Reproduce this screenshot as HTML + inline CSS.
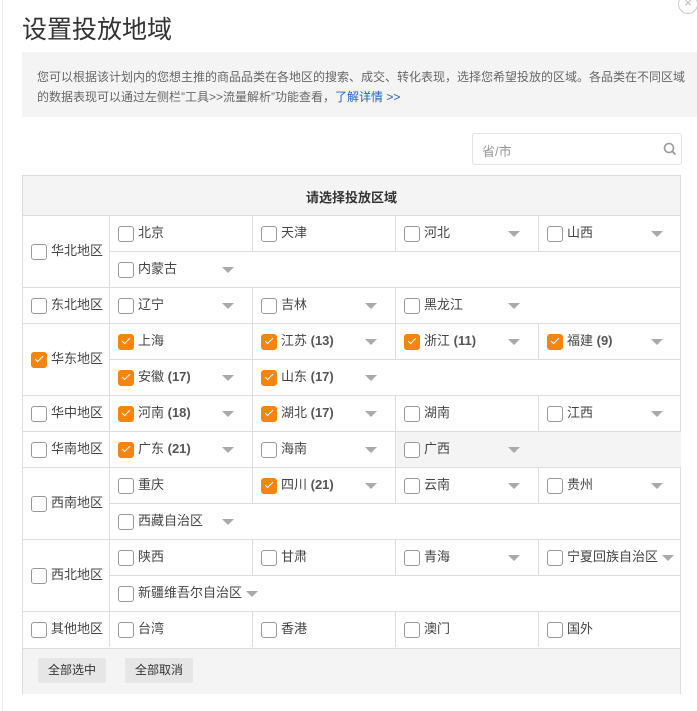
<!DOCTYPE html>
<html><head><meta charset="utf-8"><style>
body{margin:0;width:697px;height:711px;background:#fff;font-family:"Liberation Sans","Noto Sans CJK SC",sans-serif;position:relative;overflow:hidden}
.a{position:absolute}
.cb{position:absolute;width:14px;height:14px;border:1px solid #999;border-radius:3px;background:#fff}
.cb.on{background:#f5850f;border-color:#f5850f}
.cb.on:after{content:"";position:absolute;left:5px;top:1px;width:3px;height:7px;border:solid #fff;border-width:0 1.5px 1.5px 0;transform:rotate(45deg)}
.t{position:absolute;font-size:13px;color:#444;white-space:nowrap;line-height:16px}
.t b{font-weight:bold;color:#555}
.tri{position:absolute;width:0;height:0;border-left:6px solid transparent;border-right:6px solid transparent;border-top:6px solid #aaa}
.hl{position:absolute;height:1px;background:#ddd}
.vl{position:absolute;width:1px;background:#ddd}
</style></head><body>
<div class="a" style="left:2px;top:0;width:1px;height:711px;background:#eee"></div>
<div class="a" style="left:678px;top:-6px;width:18px;height:18px;border:1px solid #ccc;border-radius:50%;color:#bbb;font-size:13px;text-align:center;line-height:16px">×</div>
<div class="a" style="left:22px;top:10px;font-size:25px;color:#333">设置投放地域</div>
<div class="a" style="left:22px;top:52px;width:675px;height:65px;background:#f4f4f4"></div>
<div class="a" style="left:37px;top:67px;width:650px;font-size:12px;color:#666;line-height:20px">您可以根据该计划内的您想主推的商品品类在各地区的搜索、成交、转化表现，选择您希望投放的区域。各品类在不同区域的数据表现可以通过左侧栏”工具&gt;&gt;流量解析”功能查看，<span style="color:#1f63c8">了解详情 &gt;&gt;</span></div>
<div class="a" style="left:472px;top:133px;width:208px;height:30px;border:1px solid #e3e3e3;border-radius:3px"></div>
<div class="a" style="left:482px;top:141px;font-size:13px;color:#999">省/市</div>
<svg class="a" style="left:663px;top:142px" width="14" height="14" viewBox="0 0 14 14"><circle cx="6" cy="6" r="4.5" fill="none" stroke="#999" stroke-width="1.6"/><path d="M9.3 9.3L12.5 12.5" stroke="#999" stroke-width="1.8"/></svg>
<div class="a" style="left:22px;top:175px;width:659px;height:519px;border:1px solid #ddd;box-sizing:border-box;background:#fff"></div>
<div class="a" style="left:23px;top:176px;width:657px;height:39px;background:#f4f4f4;border-bottom:1px solid #ddd"></div>
<div class="a" style="left:23px;top:187px;width:657px;text-align:center;font-size:13px;font-weight:bold;color:#333">请选择投放区域</div>
<div class="a" style="left:23px;top:648px;width:657px;height:45px;background:#f4f4f4;border-top:1px solid #ddd"></div>
<div class="a" style="left:38px;top:658px;width:68px;height:25px;background:#e6e6e6;border-radius:2px;font-size:12px;color:#333;text-align:center;line-height:25px">全部选中</div>
<div class="a" style="left:125px;top:658px;width:68px;height:25px;background:#e6e6e6;border-radius:2px;font-size:12px;color:#333;text-align:center;line-height:25px">全部取消</div>
<div id="g"></div>
<script>
var rows=[
["华北地区",0,[[["北京",0,0,0],["天津",0,0,0],["河北",0,0,1],["山西",0,0,1]],[["内蒙古",0,0,1]]]],
["东北地区",0,[[["辽宁",0,0,1],["吉林",0,0,1],["黑龙江",0,0,1]]]],
["华东地区",1,[[["上海",1,0,0],["江苏",1,13,1],["浙江",1,11,1],["福建",1,9,1]],[["安徽",1,17,1],["山东",1,17,1]]]],
["华中地区",0,[[["河南",1,18,1],["湖北",1,17,1],["湖南",0,0,0],["江西",0,0,1]]]],
["华南地区",0,[[["广东",1,21,1],["海南",0,0,1],["广西",0,0,1]]],1],
["西南地区",0,[[["重庆",0,0,0],["四川",1,21,1],["云南",0,0,1],["贵州",0,0,1]],[["西藏自治区",0,0,1]]]],
["西北地区",0,[[["陕西",0,0,0],["甘肃",0,0,0],["青海",0,0,1],["宁夏回族自治区",0,0,1]],[["新疆维吾尔自治区",0,0,1]]]],
["其他地区",0,[[["台湾",0,0,0],["香港",0,0,0],["澳门",0,0,0],["国外",0,0,0]]]]
];
var h="",y=215,cx=[109,252,395,538,681];
rows.forEach(function(r,ri){
 var n=r[2].length,H=36*n;
 if(r[3])h+='<div class="a" style="left:395px;top:'+(y+1)+'px;width:286px;height:35px;background:#f4f4f4"></div>';
 if(ri>0)h+='<div class="hl" style="left:23px;top:'+y+'px;width:658px"></div>';
 h+='<div class="vl" style="left:109px;top:'+y+'px;height:'+H+'px"></div>';
 var my=y+H/2;
 h+='<div class="cb'+(r[1]?' on':'')+'" style="left:31px;top:'+(my-7)+'px"></div><div class="t" style="left:51px;top:'+(my-8)+'px">'+r[0]+'</div>';
 r[2].forEach(function(sr,si){
  var sy=y+36*si;
  if(si>0)h+='<div class="hl" style="left:109px;top:'+sy+'px;width:572px"></div>';
  sr.forEach(function(c,ci){
   var x=cx[ci],mid=sy+18;
   if(ci<sr.length-1)h+='<div class="vl" style="left:'+cx[ci+1]+'px;top:'+sy+'px;height:36px"></div>';
   h+='<div class="cb'+(c[1]?' on':'')+'" style="left:'+(x+9)+'px;top:'+(mid-7)+'px"></div>';
   h+='<div class="t" style="left:'+(x+29)+'px;top:'+(mid-8)+'px">'+c[0]+(c[2]?' <b>('+c[2]+')</b>':'')+'</div>';
   var tx=Math.max(x+113,x+29+c[0].length*13+4);
   if(c[3])h+='<div class="tri" style="left:'+tx+'px;top:'+(mid-2)+'px"></div>';
  });
 });
 y+=H;
});
document.getElementById("g").innerHTML=h;
</script>
</body></html>
